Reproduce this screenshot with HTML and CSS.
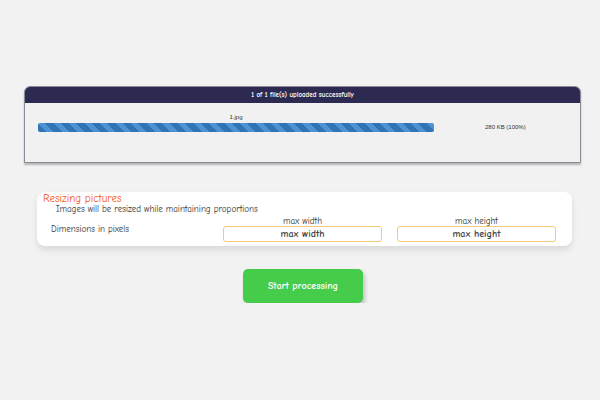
FILE: index.html
```html
<!DOCTYPE html>
<html lang="en">
<head>
  <meta charset="UTF-8" />
  <title>Resize pictures</title>
  <link rel="stylesheet" href="styles.css">
</head>
<body>
  <div class="upload-box">
    <div class="upload-head">1 of 1 file(s) uploaded successfully</div>
    <div class="upload-body">
      <div class="file-row">
        <div class="file-progress">
          <div class="file-name">1.jpg</div>
          <div class="bar"></div>
        </div>
        <div class="file-size">280 KB (100%)</div>
      </div>
    </div>
  </div>

  <div class="options-card">
    <div class="options-title">Resizing pictures</div>
    <div class="options-note">Images will be resized while maintaining proportions</div>
    <div class="options-row">
      <div class="options-label">Dimensions in pixels</div>
      <div class="field">
        <label for="maxWidth">max width</label>
        <input type="text" id="maxWidth" placeholder="max width" />
      </div>
      <div class="field">
        <label for="maxHeight">max height</label>
        <input type="text" id="maxHeight" placeholder="max height" />
      </div>
    </div>
  </div>

  <div class="actions">
    <button class="start-btn">Start processing</button>
  </div>
</body>
</html>
```

FILE: styles.css
```css
body {
  font-family: "Comic Sans MS", "Comic Neue", "Lato", sans-serif;
  background-color: #f2f2f2;
  color: #333;
  margin: 0;
  padding: 0;
}
.upload-box {
  margin: 86px 19px 0 24px;
  border: 1px solid #8a8a98;
  border-radius: 6px 6px 0 0;
  box-shadow: 0 2px 2px rgba(0, 0, 0, 0.25);
  background-color: #f1f1f1;
}
.upload-head {
  background-color: #2d2a52;
  color: white;
  font-size: 7px;
  font-weight: bold;
  text-align: center;
  height: 16px;
  line-height: 16px;
  border-radius: 5px 5px 0 0;
}
.upload-body {
  height: 59px;
  padding: 0 13px;
}
.file-row {
  display: flex;
  align-items: flex-end;
  padding-top: 10px;
}
.file-progress {
  width: 396px;
}
.file-name {
  font-family: "Liberation Sans", Arial, sans-serif;
  font-size: 6px;
  text-align: center;
  height: 8px;
  line-height: 8px;
  margin-bottom: 2px;
}
.bar {
  height: 9px;
  border-radius: 2px;
  background-color: #3074b6;
  background-image: repeating-linear-gradient(45deg, #3074b6 0, #3074b6 6px, #4f92d2 6px, #4f92d2 11px);
}
.file-size {
  font-family: "Liberation Sans", Arial, sans-serif;
  font-size: 6px;
  flex: 1;
  padding-left: 51px;
  line-height: 9px;
}
.options-card {
  margin: 29px 28px 0 37px;
  background-color: white;
  border-radius: 8px;
  box-shadow: 0 4px 6px rgba(0, 0, 0, 0.1);
  padding: 2px 6px 4px 6px;
}
.options-title {
  color: #f5581c;
  font-size: 11px;
  line-height: 10px;
}
.options-note {
  font-size: 9px;
  line-height: 10px;
  padding-left: 13px;
}
.options-row {
  display: flex;
  align-items: flex-end;
  margin-top: 2px;
}
.options-label {
  font-size: 9px;
  line-height: 10px;
  width: 180px;
  flex-shrink: 0;
  padding-left: 8px;
  padding-bottom: 8px;
  box-sizing: border-box;
}
.field {
  width: 159px;
  flex-shrink: 0;
  text-align: center;
}
.field + .field {
  margin-left: 15px;
}
.field label {
  display: block;
  font-size: 9px;
  line-height: 10px;
}
.field input {
  display: block;
  width: 100%;
  box-sizing: border-box;
  height: 16px;
  margin: 0;
  border: 1px solid #f5c878;
  border-radius: 3px;
  font-family: inherit;
  font-size: 10px;
  text-align: center;
  background: white;
}
.field input::placeholder {
  color: #444;
  font-weight: bold;
}
.actions {
  display: flex;
  justify-content: center;
  margin-top: 23px;
  padding-left: 6px;
}
.start-btn {
  background-color: #45cc4a;
  color: white;
  font-family: inherit;
  font-weight: bold;
  font-size: 10px;
  width: 120px;
  height: 34px;
  border: none;
  border-radius: 5px;
  box-shadow: 2px 3px 4px rgba(0, 0, 0, 0.2);
  cursor: pointer;
}
```
